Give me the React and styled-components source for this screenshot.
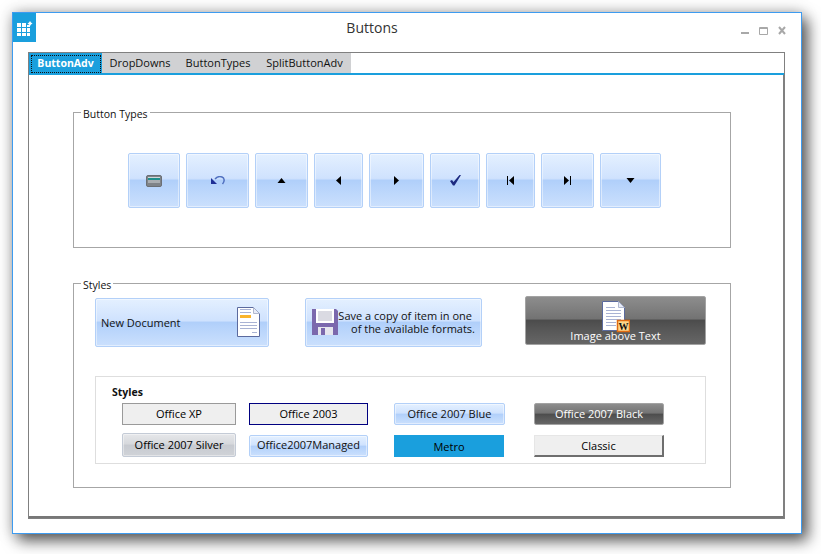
import React from 'react'
import styled, { createGlobalStyle, css } from 'styled-components'

const GlobalStyle = createGlobalStyle`
    html, body {
        margin: 0;
        padding: 0;
        background: #fff;
    }
    body {
        font-family: "Open Sans", "Liberation Sans", sans-serif;
        font-size: 11px;
        color: #111;
    }
`

const blueLook = css`
    border: 1px solid #b3d0f8;
    box-shadow: inset 0 0 0 1px rgba(255, 255, 255, 0.45);
    background: linear-gradient(to bottom, #e4f0ff 0%, #cfe2fe 46%, #b0cffa 50%, #b6d3fb 60%, #cbe0fd 100%);
    color: #111;
`

const blackLook = css`
    border: 1px solid #a3a3a3;
    background: linear-gradient(to bottom, #8d8d8d 0%, #737373 46%, #4c4c4c 50%, #555 65%, #666 100%);
    color: #fff;
`

const looks = {
    blue: blueLook,
    black: blackLook,
    xp: css`
        border: 1px solid #9a9a9a;
        background: #efefef;
    `,
    o2003: css`
        border: 1px solid #000080;
        background: #efefef;
    `,
    silver: css`
        border: 1px solid #c4cbd6;
        box-shadow: inset 0 0 0 1px rgba(255, 255, 255, 0.4);
        background: linear-gradient(to bottom, #e6e7ea 0%, #d6d8dc 46%, #c7cad0 50%, #d0d3d8 100%);
    `,
    metro: css`
        border: 1px solid #1a9fdd;
        background: #1a9fdd;
    `,
    classic: css`
        background: #efefef;
        border-top: 1px solid #e6e6e6;
        border-left: 1px solid #e6e6e6;
        border-right: 2px solid #6e6e6e;
        border-bottom: 2px solid #6e6e6e;
    `,
}

const Page = styled.div`
    box-sizing: border-box;
    width: 821px;
    height: 554px;
    padding: 12px 0 0 12px;
    overflow: hidden;
`

const Window = styled.div`
    box-sizing: border-box;
    width: 790px;
    height: 522px;
    border: 1px solid #3d9bf0;
    background: #fff;
    box-shadow: 6px 7px 14px rgba(0, 0, 0, 0.6), 0 0 14px rgba(0, 0, 0, 0.25);
    display: flex;
    flex-direction: column;
`

const TitleBar = styled.div`
    height: 39px;
    display: flex;
    flex-shrink: 0;
`

const AppTile = styled.div`
    width: 23px;
    height: 29px;
    background: #1a9fdd;
    display: flex;
    align-items: center;
    justify-content: center;
`

const Title = styled.div`
    flex: 1;
    text-align: center;
    font-family: "Open Sans", sans-serif;
    font-size: 14px;
    line-height: 30px;
    color: #333;
    padding-right: 33px;
`

const WindowControls = styled.div`
    display: flex;
    gap: 10px;
    padding: 12px 15px 0 0;
    align-self: flex-start;
    align-items: flex-end;
`

const TabControl = styled.div`
    box-sizing: border-box;
    flex: 1;
    margin: 0 16px 14px 15px;
    border: 1px solid #808080;
    display: flex;
    flex-direction: column;
`

const TabStrip = styled.div`
    display: flex;
    height: 20px;
    flex-shrink: 0;
    border-bottom: 2px solid #1a9fdd;
`

const Tab = styled.div`
    width: ${props => props.$w}px;
    background: ${props => props.$active ? '#1a9fdd' : '#d0d1d3'};
    color: ${props => props.$active ? '#fff' : '#111'};
    font-weight: ${props => props.$active ? 700 : 400};
    font-size: ${props => props.$active ? 10.5 : 11}px;
    text-align: center;
    line-height: 20px;
    box-sizing: border-box;
    position: relative;
    ${props => props.$active && css`
        &::after {
            content: '';
            position: absolute;
            inset: 2px 1px 0 2px;
            border: 1px dotted #111;
        }
    `}
`

const TabBody = styled.div`
    flex: 1;
    border-right: 1px solid #808080;
    border-bottom: 2px solid #777;
    padding: 37px 52px 0 44px;
    display: flex;
    flex-direction: column;
    gap: 35px;
`

const GroupBox = styled.div`
    box-sizing: border-box;
    height: ${props => props.$h}px;
    border: 1px solid #a6a6a6;
    position: relative;
    padding: ${props => props.$pad};
`

const GroupTitle = styled.div`
    position: absolute;
    top: -6px;
    left: 7px;
    padding: 0 2px;
    background: #fff;
    font-size: 10.5px;
    line-height: 14px;
`

const ButtonRow = styled.div`
    display: flex;
    gap: ${props => props.$gap}px;
    align-items: flex-start;
`

const ToolButton = styled.button`
    ${blueLook}
    box-sizing: border-box;
    width: ${props => props.$w}px;
    height: 55px;
    padding: 0;
    border-radius: 2px;
    display: flex;
    align-items: center;
    justify-content: center;
`

const BigButton = styled.button`
    ${props => looks[props.$look]}
    box-sizing: border-box;
    width: ${props => props.$w}px;
    height: 49px;
    padding: 0;
    border-radius: 2px;
    font-family: inherit;
    font-size: 11px;
    display: flex;
    align-items: center;
`

const NewDocButton = styled(BigButton)`
    justify-content: space-between;
    padding: 0 8px 0 5px;

    svg {
        margin-bottom: 2px;
    }
`

const SaveButton = styled(BigButton)`
    padding: 0 0 2px 6px;
`

const SaveText = styled.span`
    text-align: right;
    line-height: 13px;
    white-space: nowrap;
    width: 137px;
`

const SaveLine = styled.span`
    display: block;
    padding-right: ${props => props.$inset || 0}px;
`

const ImageTopButton = styled(BigButton)`
    flex-direction: column;
    justify-content: flex-start;
    padding-top: 4px;
    margin: -2px 0 0 7px;
`

const ImageCaption = styled.span`
    margin-top: -4px;
    line-height: 14px;
    color: #fff;
`

const StylesPanel = styled.div`
    box-sizing: border-box;
    width: 611px;
    height: 88px;
    margin-top: 29px;
    border: 1px solid #dedede;
    padding: 9px 0 0 26px;
`

const PanelTitle = styled.div`
    font-weight: 700;
    font-size: 10.5px;
    line-height: 13px;
    margin: 0 0 4px -10px;
`

const StyleGrid = styled.div`
    display: grid;
    grid-template-columns: 127px 145px 140px 130px;
    grid-template-rows: 22px 24px;
    row-gap: 8px;
`

const StyleButton = styled.button`
    ${props => looks[props.$look]}
    box-sizing: border-box;
    width: ${props => props.$w}px;
    height: ${props => props.$h || 22}px;
    padding: 0 0 ${props => props.$lift}px;
    border-radius: ${props => props.$round ? 2 : 0}px;
    font-family: inherit;
    font-size: 11px;
    align-self: end;
    white-space: nowrap;
`

function AppIcon() {
    return (
        <svg width="21" height="21" viewBox="0 0 21 21">
            <g fill="#fff">
                <rect x="3" y="6" width="4" height="4" />
                <rect x="8" y="6" width="4" height="4" />
                <rect x="13" y="8" width="3" height="2" />
                <rect x="3" y="11" width="4" height="4" />
                <rect x="8" y="11" width="4" height="4" />
                <rect x="13" y="11" width="3" height="4" />
                <rect x="3" y="16" width="4" height="3" />
                <rect x="8" y="16" width="4" height="3" />
                <rect x="13" y="16" width="3" height="3" />
                <path d="M16 4l1 1.500 1.500 1-1.500 1-1 1.500-1-1.500-1.500-1 1.500-1z" />
            </g>
        </svg>
    )
}

function MinIcon() {
    return <svg width="8" height="10" viewBox="0 0 8 10"><rect y="7" width="8" height="2" fill="#a8a8a8" /></svg>
}

function MaxIcon() {
    return <svg width="9" height="8" viewBox="0 0 9 8"><path d="M.5 .5h8v7h-8z M.5 1.500h8" fill="none" stroke="#a8a8a8" /></svg>
}

function CloseIcon() {
    return <svg width="8" height="9" viewBox="0 0 8 9"><path d="M1 1l6 7M7 1L1 8" stroke="#a8a8a8" strokeWidth="2" /></svg>
}

function DriveIcon() {
    return (
        <svg width="16" height="12" viewBox="0 0 16 12">
            <rect x=".5" y=".5" width="15" height="11" rx="1.500" fill="#7f8388" stroke="#6b6f75" />
            <rect x="2" y="2" width="12" height="1" fill="#d3d7da" />
            <rect x="2" y="3" width="12" height="2" fill="#1f8f8c" />
            <rect x="2" y="5" width="12" height="3" fill="#a9adb1" />
        </svg>
    )
}

function UndoIcon() {
    return (
        <svg width="14" height="9" viewBox="0 0 14 9">
            <path d="M4 3C6 1 9 .2 11 1c2.500 1 3 4 .5 7" fill="none" stroke="#5070c0" strokeWidth="1.500" />
            <path d="M0 2v6h6z" fill="#1f2f96" />
        </svg>
    )
}

function Arrow({ d }) {
    return (
        <svg width="9" height="9" viewBox="0 0 9 9">
            <path d={d} fill="#000" />
        </svg>
    )
}

function CheckIcon() {
    return (
        <svg width="11" height="11" viewBox="0 0 11 11">
            <path d="M0 6l2-1 1.500 2L9.500 0H11L4.500 10.500h-1.500z" fill="#1c2a80" />
        </svg>
    )
}

function DocIcon() {
    return (
        <svg width="23" height="30" viewBox="0 0 23 30">
            <path d="M.5 .5h16l6 6v23H.5z" fill="#fff" stroke="#5b6a9e" />
            <path d="M16.500 .5v6h6" fill="#e8ecf6" stroke="#b0b8d0" />
            <path d="M3 2.500h11M3 5.500h11M3 15.500h17M3 18.500h17M3 21.500h17M15 25.500h5" stroke="#a9b3d4" />
            <rect x="3" y="8" width="11" height="3" fill="#fab42b" />
        </svg>
    )
}

function FloppyIcon() {
    return (
        <svg width="26" height="26" viewBox="0 0 26 26">
            <path d="M0 0h24l2 2v24H0z" fill="#7b68ad" />
            <rect x="4" y="0" width="18" height="14" fill="#fff" />
            <path d="M6 3h14M6 5h14M6 7h14M6 9h14M6 11h14" stroke="#b5b5c5" />
            <rect x="6" y="18" width="15" height="8" fill="#e6e6ee" />
            <rect x="9" y="19" width="4" height="7" fill="#7b68ad" />
        </svg>
    )
}

function WordDocIcon() {
    return (
        <svg width="28" height="32" viewBox="0 0 28 32">
            <path d="M.5 .5h16l6 6v23H.5z" fill="#fff" stroke="#5b6a9e" />
            <path d="M16.500 .5v6h6" fill="#e8ecf6" stroke="#b0b8d0" />
            <path d="M4 6.500h9M4 9.500h15M4 12.500h15M4 15.500h15M4 18.500h15M4 21.500h10M4 24.500h10" stroke="#a9b3d4" />
            <rect x="15.500" y="19.500" width="12" height="11" fill="#fdd88c" stroke="#e06c12" strokeWidth="1.500" />
            <text x="21.500" y="29" textAnchor="middle" fontSize="10" fontWeight="700" fontFamily="Liberation Serif, serif" fill="#111">W</text>
        </svg>
    )
}

const tabs = [
    { label: 'ButtonAdv', w: 73, active: true },
    { label: 'DropDowns', w: 76 },
    { label: 'ButtonTypes', w: 80 },
    { label: 'SplitButtonAdv', w: 93 },
]

const toolButtons = [
    { w: 52, icon: <DriveIcon /> },
    { w: 63, icon: <UndoIcon /> },
    { w: 53, icon: <Arrow d="M4.500 2L8.500 7H.5z" /> },
    { w: 49, icon: <Arrow d="M7 0v9L2 4.500z" /> },
    { w: 55, icon: <Arrow d="M2 0v9l5-4.500z" /> },
    { w: 50, icon: <CheckIcon /> },
    { w: 49, icon: <Arrow d="M1 0h1v9H1zM8 0v9L3 4.500z" /> },
    { w: 53, icon: <Arrow d="M8 0H7v9h1zM1 0v9l5-4.500z" /> },
    { w: 61, icon: <Arrow d="M.5 2h8L4.500 7z" /> },
]

const styleButtons = [
    { label: 'Office XP', look: 'xp', w: 114, lift: 2 },
    { label: 'Office 2003', look: 'o2003', w: 119, lift: 2 },
    { label: 'Office 2007 Blue', look: 'blue', w: 111, lift: 2, round: true },
    { label: 'Office 2007 Black', look: 'black', w: 130, lift: 2, round: true },
    { label: 'Office 2007 Silver', look: 'silver', w: 114, h: 24, lift: 2, round: true },
    { label: 'Office2007Managed', look: 'blue', w: 119, lift: 3, round: true },
    { label: 'Metro', look: 'metro', w: 110, lift: 0 },
    { label: 'Classic', look: 'classic', w: 130, lift: 0 },
]

export default function App() {
    return (
        <Page>
            <GlobalStyle />
            <Window>
                <TitleBar>
                    <AppTile><AppIcon /></AppTile>
                    <Title>Buttons</Title>
                    <WindowControls>
                        <MinIcon />
                        <MaxIcon />
                        <CloseIcon />
                    </WindowControls>
                </TitleBar>
                <TabControl>
                    <TabStrip>
                        {tabs.map(t => (
                            <Tab key={t.label} $w={t.w} $active={t.active}>{t.label}</Tab>
                        ))}
                    </TabStrip>
                    <TabBody>
                        <GroupBox $h={136} $pad="40px 0 0 54px">
                            <GroupTitle>Button Types</GroupTitle>
                            <ButtonRow $gap={6}>
                                {toolButtons.map((b, i) => (
                                    <ToolButton key={i} $w={b.w}>{b.icon}</ToolButton>
                                ))}
                            </ButtonRow>
                        </GroupBox>
                        <GroupBox $h={205} $pad="14px 0 0 21px">
                            <GroupTitle>Styles</GroupTitle>
                            <ButtonRow $gap={36}>
                                <NewDocButton $look="blue" $w={174}>
                                    New Document
                                    <DocIcon />
                                </NewDocButton>
                                <SaveButton $look="blue" $w={177}>
                                    <FloppyIcon />
                                    <SaveText>
                                        <SaveLine $inset={3}>Save a copy of item in one</SaveLine>
                                        <SaveLine>of the available formats.</SaveLine>
                                    </SaveText>
                                </SaveButton>
                                <ImageTopButton $look="black" $w={181}>
                                    <WordDocIcon />
                                    <ImageCaption>Image above Text</ImageCaption>
                                </ImageTopButton>
                            </ButtonRow>
                            <StylesPanel>
                                <PanelTitle>Styles</PanelTitle>
                                <StyleGrid>
                                    {styleButtons.map(b => (
                                        <StyleButton key={b.label} $look={b.look} $w={b.w} $h={b.h} $lift={b.lift} $round={b.round}>
                                            {b.label}
                                        </StyleButton>
                                    ))}
                                </StyleGrid>
                            </StylesPanel>
                        </GroupBox>
                    </TabBody>
                </TabControl>
            </Window>
        </Page>
    )
}
